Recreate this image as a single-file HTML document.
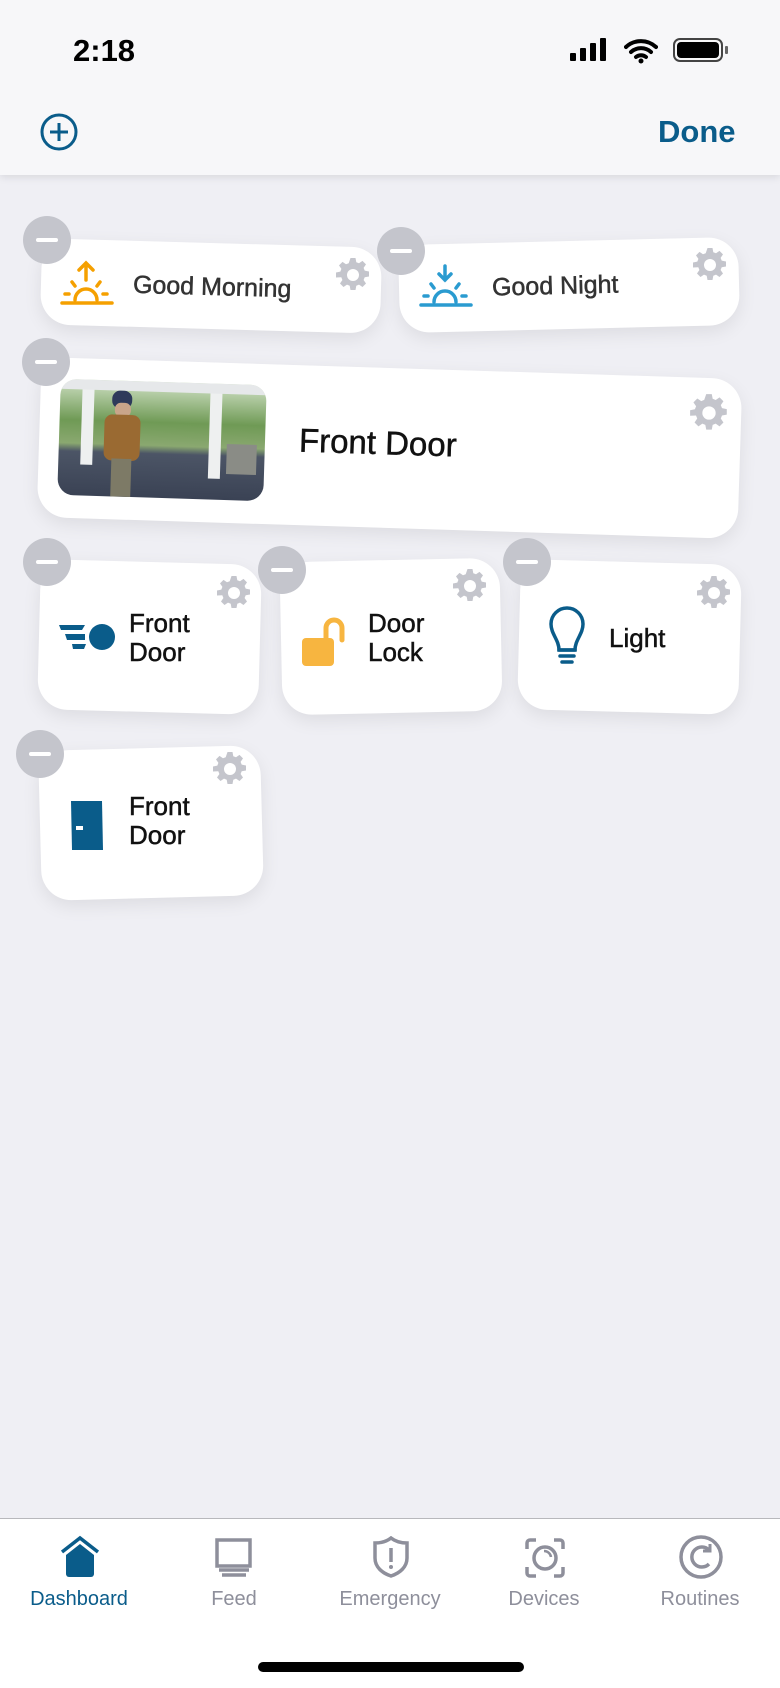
<!DOCTYPE html>
<html><head><meta charset="utf-8">
<style>
*{margin:0;padding:0;box-sizing:border-box}
body{width:780px;height:1688px;background:#efeff4;font-family:"Liberation Sans",sans-serif;position:relative;overflow:hidden}
.abs{position:absolute}
.hdr{left:0;top:0;width:780px;height:175px;background:#f7f7f9;box-shadow:0 2px 8px rgba(0,0,0,.10)}
.card{position:absolute;background:#fff;border-radius:30px;box-shadow:0 6px 18px rgba(0,0,0,.08)}
.minus{position:absolute;width:48px;height:48px;border-radius:50%;background:#c4c5cc}
.minus:after{content:"";position:absolute;left:13px;top:22px;width:22px;height:4px;border-radius:2px;background:#fff}
.gear{position:absolute;width:36px;height:36px}
.t{position:absolute;color:#111;font-size:26px;line-height:29px;-webkit-text-stroke:0.5px currentColor}
.tab{position:absolute;top:1588px;font-size:20px;color:#8e8f9b;width:140px;text-align:center}
</style></head><body>
<div class="abs hdr"></div>
<div class="abs" style="left:73px;top:33px;font-size:31px;font-weight:bold;color:#000">2:18</div>
<div class="abs" style="left:570px;top:53px;width:6px;height:8px;background:#000;border-radius:1px"></div>
<div class="abs" style="left:580px;top:48px;width:6px;height:13px;background:#000;border-radius:1px"></div>
<div class="abs" style="left:590px;top:43px;width:6px;height:18px;background:#000;border-radius:1px"></div>
<div class="abs" style="left:600px;top:38px;width:6px;height:23px;background:#000;border-radius:1px"></div>
<svg class="abs" style="left:624px;top:38px" width="34" height="26" viewBox="0 0 34 26"><path d="M2 9a22 22 0 0 1 30 0M7 14a15 15 0 0 1 20 0M12 19a8 8 0 0 1 10 0" stroke="#000" stroke-width="4" fill="none" stroke-linecap="round"/><circle cx="17" cy="23" r="2.5" fill="#000"/></svg>
<div class="abs" style="left:673px;top:38px;width:50px;height:24px;border:2px solid #444;border-radius:7px"></div>
<div class="abs" style="left:677px;top:42px;width:42px;height:16px;background:#000;border-radius:4px"></div>
<div class="abs" style="left:725px;top:46px;width:3px;height:8px;background:#666;border-radius:1px"></div>
<svg class="abs" style="left:39px;top:112px" width="40" height="40"><circle cx="20" cy="20" r="17" stroke="#0a5c8a" stroke-width="3" fill="none"/><path d="M20 11v18M11 20h18" stroke="#0a5c8a" stroke-width="3"/></svg>
<div class="abs" style="left:658px;top:114px;font-size:31px;font-weight:bold;color:#0a5c8a">Done</div>

<div class="card" style="left:41px;top:243px;width:340px;height:86px;transform:rotate(1.6deg)"></div>
<svg class="abs" style="left:60px;top:260px" width="54" height="46" viewBox="0 0 54 46"><g stroke="#f5a000" stroke-width="3.5" fill="none" stroke-linecap="round"><path d="M26 20V4M19 10l7-7 7 7"/><path d="M15 40a11 11 0 0 1 22 0"/><path d="M2 43h50"/><path d="M12 22l3 4M40 22l-3 4M5 34h4M43 34h4"/></g></svg>
<div class="t" style="left:133px;top:273px;font-size:25px;color:#333;transform:rotate(1.6deg)">Good Morning</div>
<div class="minus" style="left:23px;top:216px"></div>

<div class="card" style="left:399px;top:241px;width:340px;height:88px;transform:rotate(-1.4deg)"></div>
<svg class="abs" style="left:419px;top:262px" width="54" height="46" viewBox="0 0 54 46"><g stroke="#2a9bd0" stroke-width="3.5" fill="none" stroke-linecap="round"><path d="M26 4v14M20 12l6 6 6-6"/><path d="M15 40a11 11 0 0 1 22 0"/><path d="M2 43h50"/><path d="M12 22l3 4M40 22l-3 4M5 34h4M43 34h4"/></g></svg>
<div class="t" style="left:492px;top:272px;font-size:25px;color:#333;transform:rotate(-1.4deg)">Good Night</div>
<div class="minus" style="left:377px;top:227px"></div>

<div class="card" style="left:39px;top:368px;width:701px;height:160px;transform:rotate(1.8deg)"></div>
<div class="abs" style="left:59px;top:382px;width:206px;height:116px;border-radius:16px;overflow:hidden;transform:rotate(1.8deg);background:linear-gradient(180deg,#cfe0c4 0%,#6f9a55 35%,#8aa870 55%,#4c5566 62%,#3a4254 100%)">
 <div class="abs" style="left:22px;top:0;width:12px;height:85px;background:#eef0f0"></div>
 <div class="abs" style="left:150px;top:0;width:12px;height:95px;background:#eef0f0"></div>
 <div class="abs" style="left:0;top:0;width:206px;height:10px;background:#e6e8ea"></div>
 <div class="abs" style="left:52px;top:10px;width:20px;height:18px;border-radius:8px;background:#2e3a5a"></div>
 <div class="abs" style="left:55px;top:22px;width:16px;height:14px;border-radius:6px;background:#c9a58a"></div>
 <div class="abs" style="left:45px;top:34px;width:36px;height:46px;border-radius:8px;background:#9a6a32"></div>
 <div class="abs" style="left:53px;top:78px;width:20px;height:38px;background:#7d7a66"></div>
 <div class="abs" style="left:168px;top:60px;width:30px;height:30px;background:#8a8c86"></div>
</div>
<div class="t" style="left:299px;top:425px;font-size:33px;line-height:36px;transform:rotate(1.8deg)">Front Door</div>
<div class="minus" style="left:22px;top:338px"></div>

<div class="card" style="left:39px;top:562px;width:221px;height:150px;transform:rotate(1.5deg)"></div>
<svg class="abs" style="left:59px;top:621px" width="56" height="32" viewBox="0 0 56 32"><circle cx="43" cy="16" r="13" fill="#0a5c8a"/><path d="M0 4h26l-3 5H2zM6 13h20v6H8zM13 23h14l-2 5H14z" fill="#0a5c8a"/></svg>
<div class="t" style="left:129px;top:609px">Front<br>Door</div>
<div class="minus" style="left:23px;top:538px"></div>

<div class="card" style="left:281px;top:560px;width:220px;height:153px;transform:rotate(-1.2deg)"></div>
<svg class="abs" style="left:300px;top:612px" width="52" height="56" viewBox="0 0 52 56"><path d="M26 32V16a8 8 0 0 1 16 0v12" stroke="#f7b540" stroke-width="5" fill="none" stroke-linecap="round"/><rect x="2" y="26" width="32" height="28" rx="4" fill="#f7b540"/></svg>
<div class="t" style="left:368px;top:609px">Door<br>Lock</div>
<div class="minus" style="left:258px;top:546px"></div>

<div class="card" style="left:519px;top:562px;width:221px;height:150px;transform:rotate(1.5deg)"></div>
<svg class="abs" style="left:548px;top:606px" width="38" height="62" viewBox="0 0 38 62"><path d="M11 44c0-10-8-16-8-26a16 16 0 0 1 32 0c0 10-8 16-8 26z" stroke="#0a5c8a" stroke-width="3.5" fill="none"/><path d="M11 44h16M12 50h14M14 56h10" stroke="#0a5c8a" stroke-width="3.5" stroke-linecap="round"/></svg>
<div class="t" style="left:609px;top:624px">Light</div>
<div class="minus" style="left:503px;top:538px"></div>

<div class="card" style="left:40px;top:748px;width:222px;height:150px;transform:rotate(-1.5deg)"></div>
<svg class="abs" style="left:69px;top:800px" width="36" height="52" viewBox="0 0 36 52"><path d="M2 1h31l1 49H3z" fill="#0a5c8a"/><rect x="7" y="26" width="7" height="4" fill="#fff"/></svg>
<div class="t" style="left:129px;top:792px">Front<br>Door</div>
<div class="minus" style="left:16px;top:730px"></div>

<svg width="0" height="0" style="position:absolute"><defs><g id="g"><path d="M15.5 1h5l.8 4.2 2.7 1.1 3.5-2.4 3.5 3.5-2.4 3.5 1.1 2.7 4.3.9v5l-4.3.8-1.1 2.7 2.4 3.5-3.5 3.5-3.5-2.4-2.7 1.1-.8 4.3h-5l-.8-4.3-2.7-1.1-3.5 2.4-3.5-3.5 2.4-3.5-1.1-2.7L1 20.5v-5l4.3-.9 1.1-2.7L4 8.4l3.5-3.5L11 7.3l2.7-1.1z" fill="#c4c5cc"/><circle cx="18" cy="18" r="6" fill="#fff"/></g></defs></svg>
<svg class="gear" style="left:335px;top:257px"><use href="#g"/></svg>
<svg class="gear" style="left:692px;top:247px"><use href="#g"/></svg>
<svg class="gear" style="left:689px;top:393px;width:40px;height:40px" viewBox="0 0 36 36"><use href="#g"/></svg>
<svg class="gear" style="left:216px;top:575px"><use href="#g"/></svg>
<svg class="gear" style="left:452px;top:568px"><use href="#g"/></svg>
<svg class="gear" style="left:696px;top:575px"><use href="#g"/></svg>
<svg class="gear" style="left:212px;top:751px"><use href="#g"/></svg>

<div class="abs" style="left:0;top:1518px;width:780px;height:170px;background:#fff;border-top:1px solid #b8b8bc"></div>
<svg class="abs" style="left:58px;top:1535px" width="44" height="44" viewBox="0 0 44 44"><path d="M4 17L22 3l18 14" stroke="#0a5c8a" stroke-width="3.5" fill="none"/><path d="M8 20L22 9l14 11v19a3 3 0 0 1-3 3H11a3 3 0 0 1-3-3z" fill="#0a5c8a"/></svg>
<svg class="abs" style="left:214px;top:1538px" width="40" height="40" viewBox="0 0 40 40"><rect x="3" y="2" width="33" height="26" stroke="#8e8f9b" stroke-width="3.5" fill="none"/><path d="M5 32h30M8 37h24" stroke="#8e8f9b" stroke-width="3.5"/></svg>
<svg class="abs" style="left:372px;top:1536px" width="38" height="42" viewBox="0 0 38 42"><path d="M19 2c5 4 10 5 16 5v15c0 9-7 15-16 18C10 37 3 31 3 22V7c6 0 11-1 16-5z" stroke="#8e8f9b" stroke-width="3.5" fill="none"/><path d="M19 12v14" stroke="#8e8f9b" stroke-width="3.5"/><circle cx="19" cy="31" r="2" fill="#8e8f9b"/></svg>
<svg class="abs" style="left:524px;top:1537px" width="42" height="42" viewBox="0 0 42 42"><path d="M3 12V6a3 3 0 0 1 3-3h6M30 3h6a3 3 0 0 1 3 3v6M39 30v6a3 3 0 0 1-3 3h-6M12 39H6a3 3 0 0 1-3-3v-6" stroke="#8e8f9b" stroke-width="3.5" fill="none"/><circle cx="21" cy="21" r="11" stroke="#8e8f9b" stroke-width="3.5" fill="none"/><path d="M20 14a7 7 0 0 1 7 6" stroke="#8e8f9b" stroke-width="2.5" fill="none"/></svg>
<svg class="abs" style="left:679px;top:1535px" width="44" height="44" viewBox="0 0 44 44"><circle cx="22" cy="22" r="20" stroke="#8e8f9b" stroke-width="3.5" fill="none"/><path d="M30 15a10 10 0 1 0 0 14" stroke="#8e8f9b" stroke-width="3.5" fill="none"/><path d="M31 9v7h-7" stroke="#8e8f9b" stroke-width="3" fill="none"/></svg>
<div class="tab" style="left:9px;color:#0a5c8a">Dashboard</div>
<div class="tab" style="left:164px">Feed</div>
<div class="tab" style="left:320px">Emergency</div>
<div class="tab" style="left:474px">Devices</div>
<div class="tab" style="left:630px">Routines</div>
<div class="abs" style="left:258px;top:1662px;width:266px;height:10px;border-radius:5px;background:#000"></div>
</body></html>
